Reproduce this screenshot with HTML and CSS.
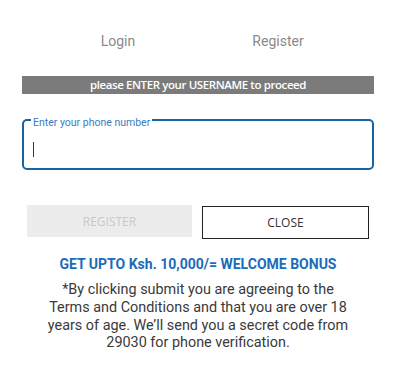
FILE: index.html
```
<!DOCTYPE html>
<html lang="en">
  <head>
    <meta charset="UTF-8" />
    <meta name="viewport" content="width=device-width, initial-scale=1.0" />
    <title>Register</title>
    <link rel="stylesheet" href="styles.css">
  </head>
  <body>
    <div class="modal">
      <div class="tabs">
        <a href="#" class="tab">Login</a>
        <a href="#" class="tab">Register</a>
      </div>
      <div class="notice">please ENTER your USERNAME to proceed</div>
      <fieldset class="phone-field">
        <legend>Enter your phone number</legend>
        <span class="caret"></span>
      </fieldset>
      <div class="button-panel">
        <button class="btn btn-register" disabled>REGISTER</button>
        <button class="btn btn-close">CLOSE</button>
      </div>
      <p class="bonus">GET UPTO Ksh. 10,000/= WELCOME BONUS</p>
      <p class="terms">*By clicking submit you are agreeing to the Terms and Conditions and that you are over 18 years of age. We’ll send you a secret code from 29030 for phone verification.</p>
    </div>
  </body>
</html>
```

FILE: styles.css
```
* {
  margin: 0;
  padding: 0;
  box-sizing: border-box;
}

body {
  font-family: "Roboto", "Liberation Sans", sans-serif;
  background: #ffffff;
  color: #333333;
}

.modal {
  width: 352px;
  margin-left: 22px;
}

.tabs {
  display: flex;
  width: 320px;
  margin: 0 auto;
  padding-top: 32px;
  height: 76px;
}

.tab {
  flex: 1;
  text-align: center;
  font-size: 14px;
  color: #8a8a8a;
  text-decoration: none;
  line-height: 18px;
}

.notice {
  background: #7b7b7b;
  color: #ffffff;
  font-family: "Open Sans", sans-serif;
  font-size: 11.5px;
  font-weight: 600;
  letter-spacing: -0.4px;
  text-align: center;
  height: 18px;
  line-height: 18px;
}

.phone-field {
  margin-top: 21px;
  height: 55px;
  border: 2px solid #1862a8;
  border-radius: 5px;
  padding: 0 7px;
  position: relative;
}

.phone-field legend {
  font-size: 10.5px;
  color: #3d7dbf;
  padding: 0 2px;
  line-height: 10px;
  position: relative;
  top: 3px;
}

.caret {
  position: absolute;
  left: 9px;
  top: 17px;
  width: 1px;
  height: 15px;
  background: #1a3d6a;
}

.button-panel {
  display: flex;
  gap: 10px;
  padding: 0 5px;
  margin-top: 35px;
  align-items: flex-start;
}

.btn {
  flex: 1;
  font-family: "Open Sans", sans-serif;
  font-size: 12px;
  background: #ffffff;
  cursor: pointer;
}

.btn-register {
  background: #ececec;
  color: #c8c8c8;
  border: none;
  height: 32px;
}

.btn-close {
  margin-top: 1px;
  height: 33px;
  border: 1px solid #222222;
  color: #333333;
}

.bonus {
  margin-top: 17px;
  text-align: center;
  font-weight: 700;
  font-size: 14px;
  color: #1b6cb8;
  line-height: 16px;
}

.terms {
  margin: 9px auto 0;
  width: 312px;
  text-align: center;
  font-size: 14.4px;
  line-height: 17.8px;
  color: #3a3a3a;
}
```
